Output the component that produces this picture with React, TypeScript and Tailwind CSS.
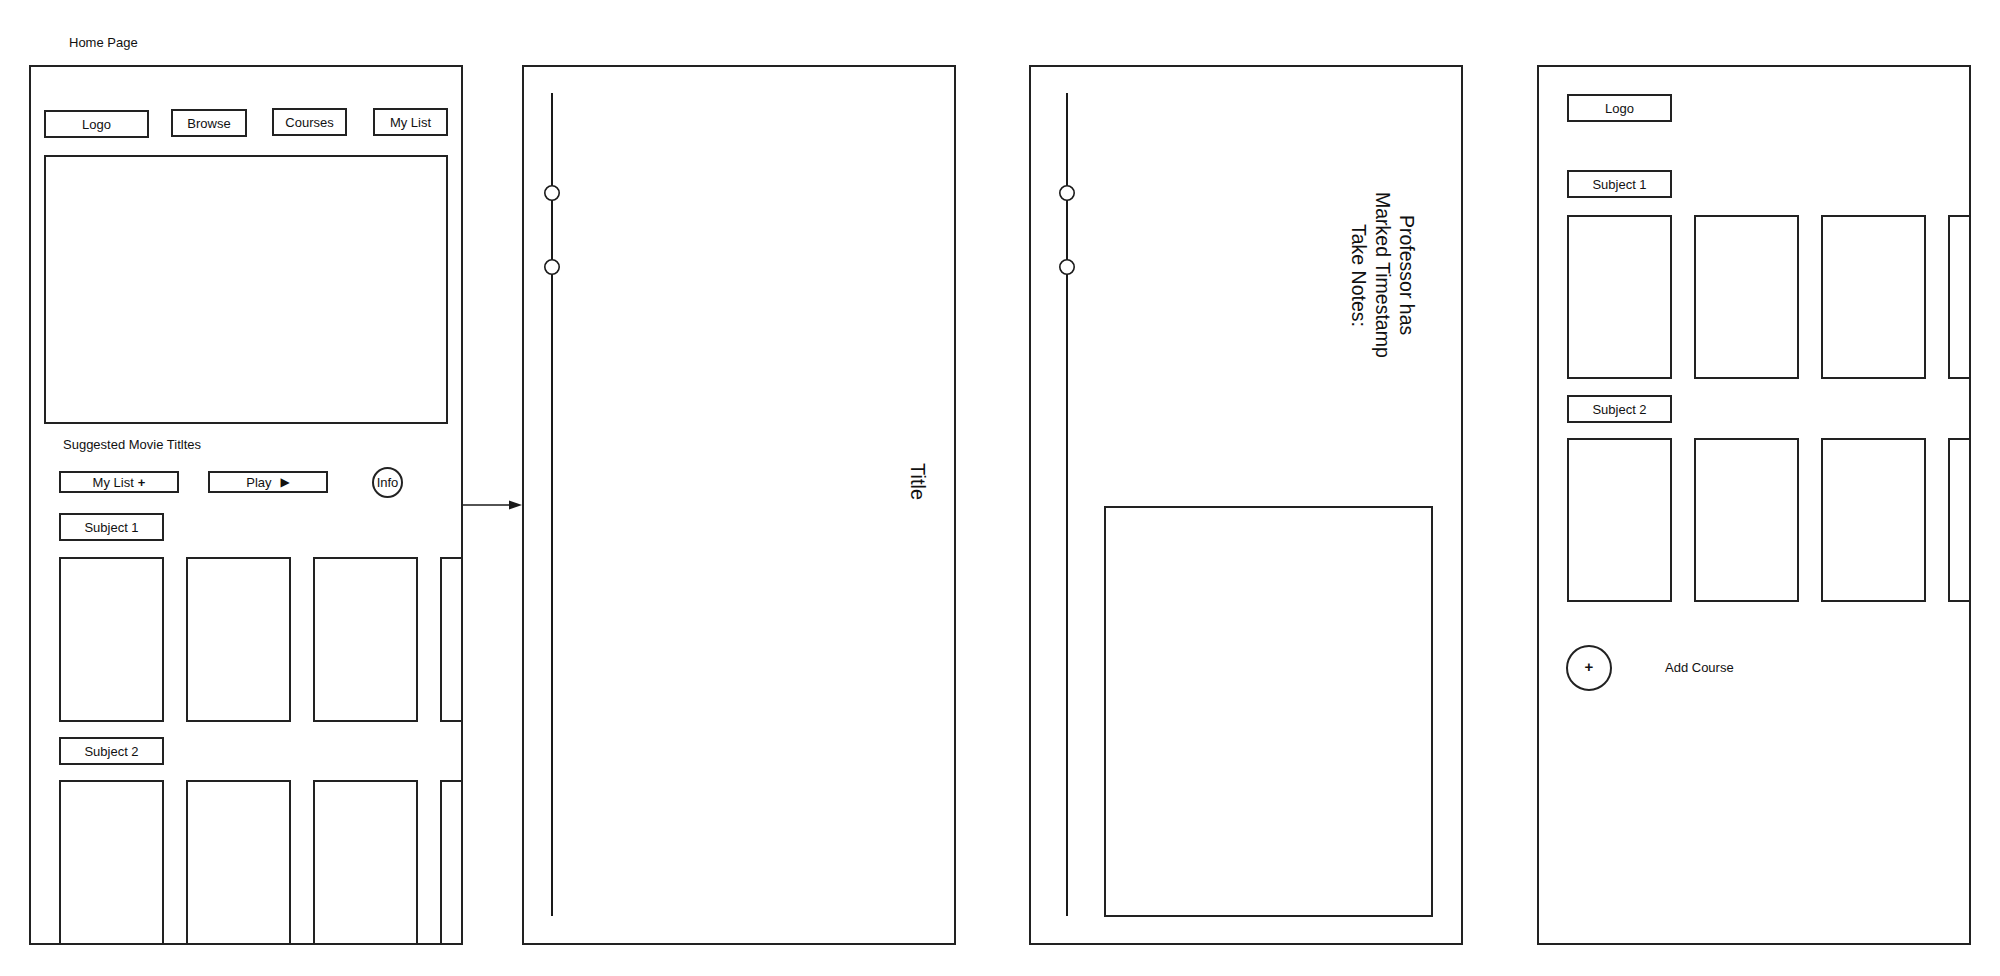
import React from 'react';

const font = 'font-["Liberation_Sans",Arial,sans-serif]';

function Box({ label, className = '', children }: { label?: string; className?: string; children?: React.ReactNode }) {
  return (
    <div className={`shrink-0 border-2 border-[#222] flex items-center justify-center text-[13px] leading-none text-[#111] ${className}`}>
      {label}
      {children}
    </div>
  );
}

function CardRow({ h = 'h-[165px]', className = '' }: { h?: string; className?: string }) {
  return (
    <div className={`flex gap-[22px] ml-[28px] ${className}`}>
      {[0, 1, 2, 3].map((i) => (
        <div key={i} className={`w-[105px] ${h} shrink-0 border-2 border-[#222]`} />
      ))}
    </div>
  );
}

// vertical timeline with two marker dots
function Timeline({ className = '' }: { className?: string }) {
  return (
    <svg width="20" height="823" viewBox="0 0 20 823" className={`shrink-0 ${className}`}>
      <line x1="10" y1="0" x2="10" y2="823" stroke="#1a1a1a" strokeWidth="2" />
      <circle cx="10" cy="100" r="7.2" fill="#fff" stroke="#1a1a1a" strokeWidth="1.6" />
      <circle cx="10" cy="174" r="7.2" fill="#fff" stroke="#1a1a1a" strokeWidth="1.6" />
    </svg>
  );
}

function Arrow() {
  return (
    <svg width="59" height="12" viewBox="0 0 59 12" className="shrink-0 self-start mt-[434px]">
      <line x1="0" y1="6" x2="48" y2="6" stroke="#1a1a1a" strokeWidth="1.5" />
      <polygon points="46,1.5 59,6 46,10.5" fill="#1a1a1a" />
    </svg>
  );
}

const panel = 'w-[434px] h-[880px] shrink-0 border-2 border-[#222] overflow-hidden bg-white';

export default function App() {
  return (
    <div className={`w-[2000px] h-[976px] bg-white text-[#111] ${font}`}>
      <div className="pl-[69px] pt-[35px] text-[13px] leading-[16px]">Home Page</div>

      <div className="flex mt-[14px] pl-[29px]">
        {/* Home page */}
        <div className={`${panel} flex flex-col`}>
          <div className="flex items-start mt-[41px] ml-[13px]">
            <Box label="Logo" className="w-[105px] h-[28px] mt-[2px]" />
            <Box label="Browse" className="w-[76px] h-[28px] mt-[1px] ml-[22px]" />
            <Box label="Courses" className="w-[75px] h-[28px] ml-[25px]" />
            <Box label="My List" className="w-[75px] h-[28px] ml-[26px]" />
          </div>
          <Box className="w-[404px] h-[269px] ml-[13px] mt-[17px]" />
          <div className="ml-[32px] mt-[13px] text-[13px] leading-[16px]">Suggested Movie Titltes</div>
          <div className="flex items-center h-[22px] ml-[28px] mt-[18px]">
            <Box className="w-[120px] h-[22px]">
              My List <span className="ml-[4px] font-bold">+</span>
            </Box>
            <Box className="w-[120px] h-[22px] ml-[29px]">
              Play <span className="ml-[9px] text-[12px] font-['DejaVu_Sans',sans-serif]">▶</span>
            </Box>
            <div className="ml-[44px] w-[31px] h-[31px] shrink-0 rounded-full border-2 border-[#222] flex items-center justify-center text-[13px] leading-none">
              Info
            </div>
          </div>
          <Box label="Subject 1" className="w-[105px] h-[28px] ml-[28px] mt-[20px]" />
          <CardRow className="mt-[16px]" />
          <Box label="Subject 2" className="w-[105px] h-[28px] ml-[28px] mt-[15px]" />
          <CardRow className="mt-[15px]" />
        </div>

        <Arrow />

        {/* Lecture player */}
        <div className={`${panel} flex items-start`}>
          <Timeline className="ml-[18px] mt-[26px]" />
          <div className="ml-auto mr-[24px] mt-[396px] [writing-mode:vertical-rl] text-[20px] leading-[24px]">Title</div>
        </div>

        {/* Timestamp notes */}
        <div className={`${panel} flex items-start ml-[73px]`}>
          <Timeline className="ml-[26px] mt-[26px]" />
          <div className="flex-1 flex flex-col">
            <div className="self-end mr-[42px] mt-[108px] w-[72px] h-[200px] [writing-mode:vertical-rl] text-center text-[19.5px] leading-[24px]">
              Professor has
              <br />
              Marked Timestamp
              <br />
              Take Notes:
            </div>
            <Box className="w-[329px] h-[411px] ml-[27px] mt-[131px]" />
          </div>
        </div>

        {/* My courses */}
        <div className={`${panel} flex flex-col ml-[74px]`}>
          <Box label="Logo" className="w-[105px] h-[28px] ml-[28px] mt-[27px]" />
          <Box label="Subject 1" className="w-[105px] h-[28px] ml-[28px] mt-[48px]" />
          <CardRow h="h-[164px]" className="mt-[17px]" />
          <Box label="Subject 2" className="w-[105px] h-[28px] ml-[28px] mt-[16px]" />
          <CardRow h="h-[164px]" className="mt-[15px]" />
          <div className="flex items-center ml-[27px] mt-[43px]">
            <div className="w-[46px] h-[46px] shrink-0 rounded-full border-2 border-[#222] flex items-center justify-center text-[15px] font-bold leading-none pb-[4px]">
              +
            </div>
            <div className="ml-[53px] text-[13px] leading-[16px]">Add Course</div>
          </div>
        </div>
      </div>
    </div>
  );
}
